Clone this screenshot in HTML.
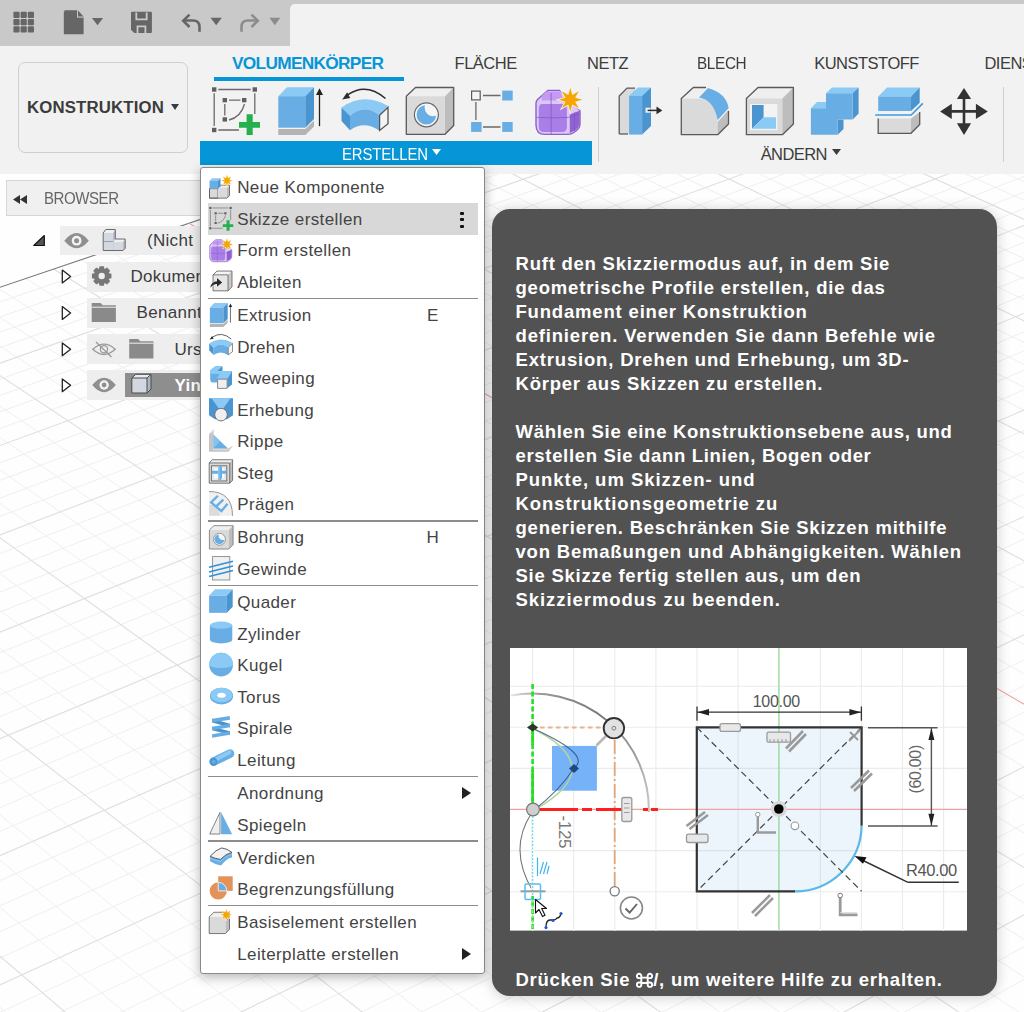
<!DOCTYPE html><html><head><meta charset="utf-8"><style>
html,body{margin:0;padding:0}
body{width:1024px;height:1012px;overflow:hidden;position:relative;background:#fefefe;font-family:"Liberation Sans", sans-serif}
.t{position:absolute;white-space:nowrap}
.i{position:absolute;overflow:visible}
</style></head><body><svg class="i" style="left:0;top:0" width="1024" height="1012" viewBox="0 0 1024 1012"><path d="M-5 303.6L1029 -49.0M-5 318.6L1029 -36.6M-5 333.8L1029 -24.1M-5 349.3L1029 -11.4M-5 380.9L1029 14.7M-5 397.1L1029 28.0M-5 413.6L1029 41.6M-5 430.3L1029 55.4M-5 464.6L1029 83.7M-5 482.2L1029 98.1M-5 500.0L1029 112.9M-5 518.2L1029 127.8M-5 555.5L1029 158.6M-5 574.7L1029 174.4M-5 594.1L1029 190.4M-5 614.0L1029 206.7M-5 654.7L1029 240.3M-5 675.6L1029 257.5M-5 696.9L1029 275.1M-5 718.6L1029 293.0M-5 763.3L1029 329.8M-5 786.2L1029 348.7M-5 809.7L1029 368.0M-5 833.5L1029 387.6M-5 882.7L1029 428.2M-5 908.0L1029 449.0M-5 933.8L1029 470.3M-5 960.2L1029 492.0M-5 1014.6L1029 536.8M-5 1042.7L1029 560.0M-5 1071.3L1029 583.6M-5 1100.6L1029 607.7M-5 1161.1L1029 657.6M-5 1192.4L1029 683.3M-5 1224.3L1029 709.7M-5 1257.0L1029 736.6M-5 1324.8L1029 792.4M-5 1359.8L1029 821.3M-5 1395.7L1029 850.9M-5 1432.5L1029 881.2M-5 1508.8L1029 944.0M-5 1548.4L1029 976.7M-5 1589.0L1029 1010.1M1569.6 -244.1L4444.3 613.7M1554.4 -239.0L4427.5 624.5M1539.1 -233.8L4410.4 635.4M1523.7 -228.6L4393.3 646.4M1492.5 -218.0L4358.5 668.7M1476.8 -212.7L4340.9 680.0M1460.9 -207.3L4323.1 691.4M1444.9 -201.9L4305.2 703.0M1412.6 -191.0L4268.9 726.4M1396.3 -185.4L4250.5 738.3M1379.8 -179.9L4232.0 750.3M1363.3 -174.3L4213.3 762.4M1329.7 -162.9L4175.3 787.1M1312.8 -157.2L4156.1 799.6M1295.7 -151.4L4136.7 812.3M1278.5 -145.6L4117.2 825.1M1243.7 -133.8L4077.5 851.1M1226.1 -127.8L4057.3 864.3M1208.4 -121.8L4037.0 877.6M1190.5 -115.8L4016.5 891.1M1154.4 -103.6L3974.9 918.5M1136.1 -97.4L3953.8 932.5M1117.7 -91.1L3932.5 946.6M1099.1 -84.9L3911.0 960.8M1061.5 -72.1L3867.3 989.8M1042.5 -65.7L3845.1 1004.5M1023.4 -59.2L3822.7 1019.5M1004.0 -52.7L3800.1 1034.5M965.0 -39.4L3754.2 1065.2M945.2 -32.7L3730.8 1080.8M925.2 -26.0L3707.3 1096.6M905.1 -19.2L3683.4 1112.6M864.4 -5.4L3635.0 1145.1M843.8 1.6L3610.4 1161.7M823.0 8.6L3585.5 1178.4M802.1 15.7L3560.4 1195.4M759.6 30.0L3509.3 1229.9M738.2 37.3L3483.2 1247.5M716.5 44.7L3456.9 1265.3M694.7 52.0L3430.3 1283.3M650.4 67.0L3376.2 1320.1M628.0 74.6L3348.6 1338.8M605.4 82.3L3320.8 1357.7M582.6 90.0L3292.5 1376.9M536.4 105.6L3235.1 1416.0M513.0 113.5L3205.8 1436.0M489.4 121.5L3176.2 1456.2M465.6 129.6L3146.1 1476.6M417.3 145.9L3085.0 1518.4M392.8 154.2L3053.8 1539.7M368.2 162.6L3022.2 1561.2M343.3 171.0L2990.1 1583.1M292.8 188.1L2924.8 1627.7M267.2 196.7L2891.4 1650.4M241.3 205.5L2857.6 1673.5M215.3 214.3L2823.4 1696.8M162.4 232.2L2753.3 1744.5M135.6 241.3L2717.6 1768.8M108.5 250.4L2681.3 1793.5M81.2 259.7L2644.4 1818.5M25.8 278.5L2569.1 1869.6M-2.3 288.0L2530.5 1895.6M-30.7 297.6L2491.4 1922.0M-59.4 307.3L2451.7 1948.8M-117.5 327.0L2370.3 2003.5M-147.0 336.9L2328.6 2031.4M-176.8 347.0L2286.3 2059.7M-206.9 357.2L2243.2 2088.4M-268.0 377.9L2154.9 2146.9M-299.1 388.4L2109.6 2176.8M-330.4 399.0L2063.6 2207.0M-362.0 409.7L2016.7 2237.7M-426.3 431.5L1920.5 2300.3M-459.0 442.5L1871.0 2332.3M-491.9 453.7L1820.7 2364.6M-525.3 465.0L1769.5 2397.4M-593.0 487.9L1664.1 2464.2M-627.4 499.5L1609.9 2498.2M-662.1 511.3L1554.6 2532.7M-697.3 523.2L1498.3 2567.5M-768.7 547.4L1382.4 2638.5M-805.0 559.7L1322.7 2674.6M-841.7 572.1L1261.8 2711.1M-878.8 584.6L1199.7 2748.0M-954.3 610.2L1071.6 2822.9M-992.6 623.2L1005.6 2860.9M-1031.4 636.3L938.2 2899.2M-1070.6 649.6L869.4 2937.8M-1150.5 676.6L727.5 3016.1M-1191.1 690.3L654.3 3055.6M-1232.2 704.2L579.6 3095.4M-1273.7 718.3L503.3 3135.4M-1358.3 746.9L345.8 3216.0M-1401.4 761.5L264.5 3256.5M-1444.9 776.3L181.6 3297.1M-1489.0 791.2L96.9 3337.7" stroke="#efefef" stroke-width="1" fill="none"/><path d="M-5 364.9L1029 1.6M-5 447.3L1029 69.4M-5 536.7L1029 143.1M-5 634.1L1029 223.4M-5 740.7L1029 311.2M-5 857.9L1029 407.7M-5 987.1L1029 514.2M-5 1130.5L1029 632.4M-5 1290.5L1029 764.2M-5 1470.2L1029 912.2M1584.7 -249.2L4461.1 603.1M1508.2 -223.3L4375.9 657.5M1428.8 -196.5L4287.1 714.6M1346.6 -168.6L4194.4 774.7M1261.2 -139.7L4097.4 838.0M1172.5 -109.7L3995.8 904.7M1080.4 -78.5L3889.2 975.2M984.6 -46.1L3777.3 1049.8M884.8 -12.3L3659.4 1128.8M780.9 22.8L3535.0 1212.5M672.6 59.5L3403.4 1301.6M559.6 97.8L3264.0 1396.4M441.5 137.7L3115.7 1497.4M318.1 179.5L2957.7 1605.2M53.6 269.0L2607.0 1843.9M-88.3 317.1L2411.3 1976.0M-237.3 367.5L2199.4 2117.4M-394.0 420.5L1969.0 2268.8M-558.9 476.4L1717.2 2430.6M-732.8 535.2L1440.9 2602.8M-916.3 597.3L1136.3 2785.2M-1110.3 663.0L799.2 2976.8M-1315.8 732.5L425.3 3175.6" stroke="#dedede" stroke-width="1.1" fill="none"/><path d="M-5 288.9L1029 -61.1" stroke="#777" stroke-width="1.1" fill="none"/><path d="M189.0 223.2L2788.6 1720.5" stroke="#f2a0a0" stroke-width="1.1" fill="none"/></svg>
<div style="position:absolute;left:0;top:0;width:1024px;height:46px;background:#c9c9c9"></div>
<div style="position:absolute;left:290px;top:4px;width:734px;height:50px;background:#f2f2f2;border-top-left-radius:5px"></div>
<svg class="i" style="left:0;top:0" width="300" height="46" viewBox="0 0 300 46"><rect x="13.4" y="11.8" width="6.2" height="6.2" rx="1" fill="#666"/><rect x="20.6" y="11.8" width="6.2" height="6.2" rx="1" fill="#666"/><rect x="27.8" y="11.8" width="6.2" height="6.2" rx="1" fill="#666"/><rect x="13.4" y="19.0" width="6.2" height="6.2" rx="1" fill="#666"/><rect x="20.6" y="19.0" width="6.2" height="6.2" rx="1" fill="#666"/><rect x="27.8" y="19.0" width="6.2" height="6.2" rx="1" fill="#666"/><rect x="13.4" y="26.2" width="6.2" height="6.2" rx="1" fill="#666"/><rect x="20.6" y="26.2" width="6.2" height="6.2" rx="1" fill="#666"/><rect x="27.8" y="26.2" width="6.2" height="6.2" rx="1" fill="#666"/><path d="M64.5 11.2Q63.8 11.2 63.8 12V33.4Q63.8 34.3 64.6 34.3H82.8Q83.6 34.3 83.6 33.4V17.5L77 10.2H64.6z" fill="#666"/><path d="M77 10.2V17.5H83.6" fill="#c9c9c9"/><path d="M77.2 10.5V17.2H83.4z" fill="#c9c9c9"/><path d="M78 10.5L83.5 16.5H78z" fill="#666"/><path d="M92 18H103.1L97.55 25.3z" fill="#666"/><path d="M131 12.8Q131 11.7 132.1 11.7H150.8Q151.9 11.7 151.9 12.8V32Q151.9 33.1 150.8 33.1H134.3L131 29.8z" fill="#666"/><path d="M136.3 12.4V19.3H146.7V12.4" fill="none" stroke="#c9c9c9" stroke-width="1.8"/><path d="M137.5 33V26.3H145.4V33" fill="none" stroke="#c9c9c9" stroke-width="1.8"/><path d="M199.5 31.7V27Q199.5 20.5 193 20.5H184.5" fill="none" stroke="#666" stroke-width="2.6"/><path d="M189.5 14.6L183.2 20.8L189.5 27" fill="none" stroke="#666" stroke-width="2.6"/><path d="M210.6 17.8H221.8L216.2 25.3z" fill="#666"/><path d="M241.5 31.7V27Q241.5 20.5 248 20.5H256.5" fill="none" stroke="#8c8c8c" stroke-width="2.6"/><path d="M251.5 14.6L257.8 20.8L251.5 27" fill="none" stroke="#8c8c8c" stroke-width="2.6"/><path d="M269.4 17.8H280.3L274.85 25.3z" fill="#8c8c8c"/></svg>
<div style="position:absolute;left:0;top:46px;width:1024px;height:128px;background:#f2f2f2"></div>
<div style="position:absolute;left:18px;top:62px;width:168px;height:89px;border:1px solid #cfcfcf;border-radius:7px;background:#f1f1f1"></div>
<div class="t" style="left:27.00px;top:99.98px;font-size:16.8px;line-height:16.8px;color:#3c3c3c;font-weight:bold;letter-spacing:0.15px;">KONSTRUKTION</div>
<svg class="i" style="left:171px;top:104px;" width="8" height="7" viewBox="0 0 8 7"><path d="M0 0H8L4 6z" fill="#3c3c3c"/></svg>
<div class="t" style="left:232.00px;top:54.56px;font-size:17.3px;line-height:17.3px;color:#0696d7;font-weight:bold;letter-spacing:-0.7px;">VOLUMENKÖRPER</div>
<div style="position:absolute;left:214px;top:77px;width:190px;height:4px;background:#0696d7"></div>
<div class="t" style="left:454.60px;top:55.23px;font-size:16.5px;line-height:16.5px;color:#3c3c3c;font-weight:normal;letter-spacing:-0.5px;">FLÄCHE</div>
<div class="t" style="left:587.00px;top:55.23px;font-size:16.5px;line-height:16.5px;color:#3c3c3c;font-weight:normal;letter-spacing:-0.5px;">NETZ</div>
<div class="t" style="left:696.60px;top:55.23px;font-size:16.5px;line-height:16.5px;color:#3c3c3c;font-weight:normal;letter-spacing:-0.4px;transform:scaleX(0.93);transform-origin:0 0;">BLECH</div>
<div class="t" style="left:814.20px;top:55.23px;font-size:16.5px;line-height:16.5px;color:#3c3c3c;font-weight:normal;letter-spacing:-0.5px;">KUNSTSTOFF</div>
<div class="t" style="left:984.40px;top:55.23px;font-size:16.5px;line-height:16.5px;color:#3c3c3c;font-weight:normal;letter-spacing:-0.5px;">DIENSTPROGRAMME</div>
<div style="position:absolute;left:200px;top:141px;width:392px;height:24px;background:#0696d7"></div>
<div class="t" style="left:341.80px;top:146.03px;font-size:16.5px;line-height:16.5px;color:#ffffff;font-weight:normal;letter-spacing:-0.1px;transform:scaleX(0.9);transform-origin:0 0;">ERSTELLEN</div>
<svg class="i" style="left:432px;top:149px;" width="9" height="7" viewBox="0 0 9 7"><path d="M0 0H9L4.5 6z" fill="#fff"/></svg>
<div class="t" style="left:760.70px;top:146.03px;font-size:16.5px;line-height:16.5px;color:#3c3c3c;font-weight:normal;letter-spacing:-0.6px;">ÄNDERN</div>
<svg class="i" style="left:832px;top:149px;" width="9" height="7" viewBox="0 0 9 7"><path d="M0 0H9L4.5 6z" fill="#3c3c3c"/></svg>
<div style="position:absolute;left:598px;top:87px;width:1px;height:75px;background:#cfcfcf"></div>
<div style="position:absolute;left:1003px;top:87px;width:1px;height:75px;background:#cfcfcf"></div>
<svg class="i" style="left:0;top:0" width="1024" height="174" viewBox="0 0 1024 174"><g id="ic_sketch"><rect x="212" y="87.3" width="4.4" height="4.4" fill="#5f5f5f"/><rect x="252.6" y="87.3" width="4.4" height="4.4" fill="#5f5f5f"/><rect x="212" y="127.8" width="4.4" height="4.4" fill="#5f5f5f"/><rect x="222.6" y="98" width="4.4" height="4.3" fill="#5f5f5f"/><rect x="242" y="98" width="4.4" height="4.3" fill="#5f5f5f"/><rect x="222.6" y="117.3" width="4.4" height="4.3" fill="#5f5f5f"/><g stroke="#6a6a6a" stroke-width="1.3" fill="none"><path d="M218.3 89.5H250.7M214.2 93.3V126M254.8 93.3V114M218.3 130H239M229 100.1H240.5M224.8 104V115.5M244.5 104Q241 117 229 120"/></g><path d="M246.6 114.2H252.7V122.1H260V127.7H252.7V135H246.6V127.7H239V122.1H246.6z" fill="#25b04e"/></g><g id="ic_extrude"><path d="M278.3 129H305.3L314 120.6V126.5L305.3 135H278.3z" fill="#b4b4b4"/><path d="M278.3 96.2L287 87.2H314L305.3 96.2z" fill="#8ccaf6"/><path d="M278.3 96.2H305.3V127.7H278.3z" fill="#68aee4"/><path d="M305.3 96.2L314 87.2V119L305.3 127.7z" fill="#4a94cf"/><path d="M319.5 126.2V94" stroke="#222" stroke-width="1.3"/><path d="M316 95L319.5 88.3L323 95z" fill="#222"/></g><g id="ic_revolve"><path d="M385.5 98.5Q366 82 347.5 95" stroke="#2b2b2b" stroke-width="1.5" fill="none"/><path d="M342.2 99.4L347.2 92.2L350.2 98z" fill="#2b2b2b"/><path d="M341.5 107.4Q364 92 388 106L379.2 115Q364 103 350 115.7z" fill="#8ccaf6"/><path d="M350 115.7Q364 103 379.2 115V130.5Q364 120 350 130.2z" fill="#68aee4"/><path d="M341.5 107.4L350 115.7V130.2L341.5 121z" fill="#4a94cf"/><path d="M379.6 115.2L388 107.2V123.8L379.6 130.4z" fill="#f4f4f4" stroke="#555" stroke-width="1.3"/></g><g id="ic_hole"><path d="M406.3 96.2L415.5 87.5H453.7L445 96.2z" fill="#efefef"/><path d="M406.3 96.2H445V134.3H406.3z" fill="#dadada"/><path d="M445 96.2L453.7 87.5V125.5L445 134.3z" fill="#bdbdbd"/><path d="M406.3 96.2L415.5 87.5H453.7V125.5L445 134.3H406.3z" fill="none" stroke="#5a5a5a" stroke-width="1.3" stroke-linejoin="round"/><circle cx="426.4" cy="114.8" r="12" fill="#f5f5f5" stroke="#666" stroke-width="1.2"/><mask id="hm"><rect x="400" y="90" width="60" height="50" fill="#fff"/><circle cx="433.2" cy="107.6" r="8.6" fill="#000"/></mask><circle cx="426.4" cy="114.8" r="9.8" fill="#68aee4" mask="url(#hm)"/></g><rect x="471.6" y="91.1" width="8.6" height="8.8" fill="#f4f4f4" stroke="#5a5a5a" stroke-width="1.2"/><rect x="502.2" y="90.6" width="10.5" height="9.9" fill="#68aee4"/><rect x="471.1" y="122" width="10.5" height="9.9" fill="#68aee4"/><rect x="502.2" y="122" width="10.5" height="9.9" fill="#68aee4"/><path d="M483 95.5H500.5M475.9 102V120M483 127H500.5" stroke="#6a6a6a" stroke-width="1.3"/><g id="ic_form"><path d="M548 90.4H560L580 110.4V123.8Q580 128 576 131L573 133Q571 134.4 567 134.4H545Q536 134.4 536 125V103.3Q536 101 538 99z" fill="#dcc8f7" stroke="#8d60cc" stroke-width="1.4" stroke-linejoin="round"/><path d="M541.7 95.7L546 91.5H560L564 100.4H541.7z" fill="#c49af5"/><path d="M542 103.9H562Q566.9 103.9 566.9 109V127Q566.9 132 562 132H544Q538.8 132 538.8 127V109Q538.8 103.9 542 103.9z" fill="#a97ee6"/><path d="M569.8 114.5L579.5 110.8V123.8Q579 127 576 130L569.8 133z" fill="#9062d2"/><path d="M551.1 93V134M536.5 117.4Q552 118.5 568.5 117.4L579.5 113.5M574.5 112.5V131" stroke="#8457c4" stroke-width="1" fill="none" opacity="0.75"/><path d="M570.30 87.80 L572.29 95.00 L578.79 91.31 L575.10 97.81 L582.30 99.80 L575.10 101.79 L578.79 108.29 L572.29 104.60 L570.30 111.80 L568.31 104.60 L561.81 108.29 L565.50 101.79 L558.30 99.80 L565.50 97.81 L561.81 91.31 L568.31 95.00z" fill="#f7a600" stroke="#f2f2f2" stroke-width="1.6" paint-order="stroke"/></g><path d="M619.2 96L627 88.1H635V134H619.2z" fill="#dadada"/><path d="M619.2 134V96L627 88.1H635" fill="none" stroke="#5a5a5a" stroke-width="1.3"/><path d="M619.2 134H628" stroke="#5a5a5a" stroke-width="1.3"/><path d="M629.1 95.7L637.8 87.5H651L642.1 95.7z" fill="#8ccaf6"/><path d="M629.1 95.7H642.1V134.6H629.1z" fill="#68aee4"/><path d="M642.1 95.7L651 87.5V126L642.1 134.6z" fill="#4a94cf"/><rect x="645.5" y="107.7" width="5" height="5" fill="#f2f2f2"/><path d="M647.6 110.4H657.5" stroke="#2b2b2b" stroke-width="1.5"/><path d="M656.5 106.6L662.3 110.4L656.5 114.2z" fill="#2b2b2b"/><path d="M681.3 98.5L693.3 87.5H706L699 97.5z" fill="#efefef"/><path d="M681.3 98.5H699Q717.7 99 717.7 122V134.7H681.3z" fill="#dadada"/><path d="M717.7 122L728.5 110V124L717.7 134.7z" fill="#bdbdbd"/><path d="M699 97.5L708 88Q726 93 728.7 108L717.7 120Q714 100 699 97.5z" fill="#68aee4"/><path d="M706 87.5H693.3L681.3 98.5V134.7H717.7L728.5 124V111" fill="none" stroke="#5a5a5a" stroke-width="1.3" stroke-linejoin="round"/><path d="M746.4 98.5L758 87.5H793.4L782.4 98.5z" fill="#efefef"/><path d="M746.4 98.5H782.4V134.7H746.4z" fill="#dadada"/><path d="M782.4 98.5L793.4 87.5V124L782.4 134.7z" fill="#bdbdbd"/><path d="M746.4 98.5L758 87.5H793.4V124L782.4 134.7H746.4z" fill="none" stroke="#5a5a5a" stroke-width="1.3" stroke-linejoin="round"/><rect x="750" y="104" width="27.3" height="26.2" fill="#f3f3f3"/><path d="M752 105H763.6V117.3L752 128.7z" fill="#4a94cf"/><path d="M763.6 117.3H776V128.7H752z" fill="#8ccaf6"/><path d="M810.9 108.2L817 102H826V108.2z" fill="#8ccaf6"/><path d="M826 93.2L832 87.4H858.6L852.6 93.2z" fill="#8ccaf6"/><path d="M852.6 93.2L858.6 87.4V113.6L852.6 119.6z" fill="#4a94cf"/><path d="M837.7 119.6H843.5V129L837.7 134.7z" fill="#4a94cf"/><path d="M810.9 108.2H826V93.2H852.6V119.6H837.7V134.7H810.9z" fill="#68aee4"/><path d="M878.2 118.6H911V133.3H878.2z" fill="#dadada"/><path d="M911 118.6L919.7 112V124.5L911 133.3z" fill="#bdbdbd"/><path d="M878.2 118.6V133.3H911L919.7 124.5V112" fill="none" stroke="#5a5a5a" stroke-width="1.3"/><path d="M878.2 96.4L887 87.4H919.7L911 96.4z" fill="#8ccaf6"/><path d="M878.2 96.4H911V111H878.2z" fill="#68aee4"/><path d="M911 96.4L919.7 87.4V103L911 111z" fill="#4a94cf"/><path d="M875.2 115H911.2L922.8 103.4" fill="none" stroke="#f2f2f2" stroke-width="4.5"/><path d="M875.2 115H911.2L922.8 103.4" fill="none" stroke="#3d9be0" stroke-width="1.6"/><path d="M964 88L971.1 99H956.9z M964 135L956.9 123.3H971.1z M940.1 111.4L951.8 103.8V118.9z M987.8 111.4L975.9 103.8V118.9z" fill="#333"/><path d="M964 98V124M950 111.4H978" stroke="#333" stroke-width="2.6"/></svg>
<div style="position:absolute;left:6px;top:180px;width:220px;height:36px;border:1px solid #d6d6d6;background:#f0f0f0;box-sizing:border-box"></div>
<svg class="i" style="left:13px;top:195px;" width="16" height="9" viewBox="0 0 16 9"><path d="M0 4.5L7 0V9z M7 4.5L14 0V9z" fill="#333"/></svg>
<div class="t" style="left:43.60px;top:190.01px;font-size:17px;line-height:17px;color:#666;font-weight:normal;letter-spacing:-0.5px;transform:scaleX(0.885);transform-origin:0 0;">BROWSER</div>
<div style="position:absolute;left:60.2px;top:225.8px;width:150px;height:29.4px;background:#eeeeee"></div>
<div style="position:absolute;left:87.4px;top:261.8px;width:130px;height:30.2px;background:#eeeeee"></div>
<div style="position:absolute;left:87.4px;top:298px;width:130px;height:29.6px;background:#eeeeee"></div>
<div style="position:absolute;left:87.4px;top:334.3px;width:130px;height:29.4px;background:#eeeeee"></div>
<div style="position:absolute;left:87.4px;top:370.2px;width:130px;height:29.4px;background:#eeeeee"></div>
<div style="position:absolute;left:124.7px;top:372.9px;width:90px;height:24px;background:#8e8e8e"></div>
<svg class="i" style="left:0;top:220" width="200" height="190" viewBox="0 220 200 190"><path d="M33.8 245.5H44.3V235.5z" fill="#555" stroke="#111" stroke-width="1.2" stroke-linejoin="round"/><path d="M62.3 270.1V282.9L70.6 276.5z" fill="#fff" stroke="#222" stroke-width="1.3" stroke-linejoin="round"/><path d="M62.3 306.6V319.4L70.6 313z" fill="#fff" stroke="#222" stroke-width="1.3" stroke-linejoin="round"/><path d="M62.3 342.9V355.7L70.6 349.3z" fill="#fff" stroke="#222" stroke-width="1.3" stroke-linejoin="round"/><path d="M62.3 378.9V391.7L70.6 385.3z" fill="#fff" stroke="#222" stroke-width="1.3" stroke-linejoin="round"/><path d="M64.3 240.7Q76.6 225.5 88.8 240.7Q76.6 255.9 64.3 240.7z" fill="#8f8f8f"/><circle cx="76.6" cy="240.7" r="4.9" fill="#f3f3f3"/><circle cx="76.6" cy="240.7" r="2.5" fill="#8f8f8f"/><path d="M92.3 385Q104.1 370.4 115.8 385Q104.1 399.6 92.3 385z" fill="#8f8f8f"/><circle cx="104.1" cy="385" r="4.7" fill="#f3f3f3"/><circle cx="104.1" cy="385" r="2.4" fill="#8f8f8f"/><path d="M92.8 349.3Q104 339 115.2 349.3Q104 359.6 92.8 349.3z" fill="none" stroke="#9a9a9a" stroke-width="1.3"/><circle cx="104" cy="349.3" r="3.6" fill="none" stroke="#9a9a9a" stroke-width="1.3"/><path d="M96 342L111.5 357" stroke="#9a9a9a" stroke-width="1.3"/><path d="M103.2 233L105.8 229.5H115.3L113 233z" fill="#eef0f4"/><path d="M103.2 233H113V250.5H103.2z" fill="#d3d8e1"/><path d="M113 233L115.3 229.5V248L113 250.5z" fill="#b8bfcb"/><path d="M103.2 241.5H113" stroke="#8a9099" stroke-width="0.8"/><path d="M113.3 242L115.6 239H125.2L123 242z" fill="#eef0f4"/><path d="M113.3 242H123V250.5H113.3z" fill="#d3d8e1"/><path d="M123 242L125.2 239V248.2L123 250.5z" fill="#b8bfcb"/><path d="M103.2 250.5V233L105.8 229.5H115.3V239H125.2V248.2L123 250.5z" fill="none" stroke="#6a6a6a" stroke-width="1" stroke-linejoin="round"/><path d="M111.46 273.82 L111.46 278.18 L108.27 278.94 L108.42 278.57 L110.14 281.36 L107.06 284.44 L104.27 282.72 L104.64 282.57 L103.88 285.76 L99.52 285.76 L98.76 282.57 L99.13 282.72 L96.34 284.44 L93.26 281.36 L94.98 278.57 L95.13 278.94 L91.94 278.18 L91.94 273.82 L95.13 273.06 L94.98 273.43 L93.26 270.64 L96.34 267.56 L99.13 269.28 L98.76 269.43 L99.52 266.24 L103.88 266.24 L104.64 269.43 L104.27 269.28 L107.06 267.56 L110.14 270.64 L108.42 273.43 L108.27 273.06z" fill="#777"/><circle cx="101.7" cy="276" r="3.2" fill="#efefef"/><path d="M91.7 303H100.7L102.7 305.3H115.9V322H91.7z" fill="#8a8a8a"/><path d="M91.7 307.2H115.9" stroke="#efefef" stroke-width="1"/><path d="M129.2 339H138.2L140.2 341.3H153.4V358.5H129.2z" fill="#8a8a8a"/><path d="M129.2 343.2H153.4" stroke="#efefef" stroke-width="1"/><path d="M131.8 378L135.8 374.3H151L147 378z" fill="#e8ebf0"/><path d="M131.8 378H147V393H131.8z" fill="#d2d7e0"/><path d="M147 378L151 374.3V389L147 393z" fill="#aeb5c2"/><path d="M131.8 378L135.8 374.3H151V389L147 393H131.8z M147 393V378L151 374.3 M131.8 378H147" fill="none" stroke="#4a4a4a" stroke-width="1" stroke-linejoin="round"/></svg>
<div class="t" style="left:147.00px;top:232.21px;font-size:17px;line-height:17px;color:#3c3c3c;font-weight:normal;letter-spacing:0.3px;">(Nicht</div>
<div class="t" style="left:130.50px;top:268.21px;font-size:17px;line-height:17px;color:#3c3c3c;font-weight:normal;letter-spacing:0.3px;">Dokumen</div>
<div class="t" style="left:136.50px;top:304.41px;font-size:17px;line-height:17px;color:#3c3c3c;font-weight:normal;letter-spacing:0.3px;">Benannt</div>
<div class="t" style="left:174.50px;top:340.61px;font-size:17px;line-height:17px;color:#3c3c3c;font-weight:normal;letter-spacing:0.3px;">Urs</div>
<div class="t" style="left:174.50px;top:376.61px;font-size:17px;line-height:17px;color:#ffffff;font-weight:bold;letter-spacing:0.3px;">Yin</div>
<div style="position:absolute;left:200px;top:166.5px;width:286px;height:306.5px;"></div>
<div style="position:absolute;left:200px;top:166.6px;width:283px;height:805.2px;border:1.6px solid #8a8a8a;border-radius:3px;background:#fff;box-shadow:0 3px 12px rgba(0,0,0,0.3)"></div>
<div style="position:absolute;left:207.6px;top:202.94px;width:270.4px;height:31.566px;background:#d8d8d8"></div>
<div style="position:absolute;left:207.6px;top:297.63px;width:270.4px;height:1.5px;background:#8c8c8c"></div>
<div style="position:absolute;left:207.6px;top:520.11px;width:270.4px;height:1.5px;background:#8c8c8c"></div>
<div style="position:absolute;left:207.6px;top:584.76px;width:270.4px;height:1.5px;background:#8c8c8c"></div>
<div style="position:absolute;left:207.6px;top:775.67px;width:270.4px;height:1.5px;background:#8c8c8c"></div>
<div style="position:absolute;left:207.6px;top:840.31px;width:270.4px;height:1.5px;background:#8c8c8c"></div>
<div style="position:absolute;left:207.6px;top:904.96px;width:270.4px;height:1.5px;background:#8c8c8c"></div>
<div class="t" style="left:237.20px;top:179.18px;font-size:17px;line-height:17px;color:#444444;font-weight:normal;letter-spacing:0.4px;">Neue Komponente</div>
<div class="t" style="left:237.20px;top:210.75px;font-size:17px;line-height:17px;color:#444444;font-weight:normal;letter-spacing:0.4px;">Skizze erstellen</div>
<div class="t" style="left:237.20px;top:242.31px;font-size:17px;line-height:17px;color:#444444;font-weight:normal;letter-spacing:0.4px;">Form erstellen</div>
<div class="t" style="left:237.20px;top:273.88px;font-size:17px;line-height:17px;color:#444444;font-weight:normal;letter-spacing:0.4px;">Ableiten</div>
<div class="t" style="left:237.20px;top:306.96px;font-size:17px;line-height:17px;color:#444444;font-weight:normal;letter-spacing:0.4px;">Extrusion</div>
<div class="t" style="left:237.20px;top:338.53px;font-size:17px;line-height:17px;color:#444444;font-weight:normal;letter-spacing:0.4px;">Drehen</div>
<div class="t" style="left:237.20px;top:370.09px;font-size:17px;line-height:17px;color:#444444;font-weight:normal;letter-spacing:0.4px;">Sweeping</div>
<div class="t" style="left:237.20px;top:401.66px;font-size:17px;line-height:17px;color:#444444;font-weight:normal;letter-spacing:0.4px;">Erhebung</div>
<div class="t" style="left:237.20px;top:433.22px;font-size:17px;line-height:17px;color:#444444;font-weight:normal;letter-spacing:0.4px;">Rippe</div>
<div class="t" style="left:237.20px;top:464.79px;font-size:17px;line-height:17px;color:#444444;font-weight:normal;letter-spacing:0.4px;">Steg</div>
<div class="t" style="left:237.20px;top:496.36px;font-size:17px;line-height:17px;color:#444444;font-weight:normal;letter-spacing:0.4px;">Prägen</div>
<div class="t" style="left:237.20px;top:529.44px;font-size:17px;line-height:17px;color:#444444;font-weight:normal;letter-spacing:0.4px;">Bohrung</div>
<div class="t" style="left:237.20px;top:561.00px;font-size:17px;line-height:17px;color:#444444;font-weight:normal;letter-spacing:0.4px;">Gewinde</div>
<div class="t" style="left:237.20px;top:594.08px;font-size:17px;line-height:17px;color:#444444;font-weight:normal;letter-spacing:0.4px;">Quader</div>
<div class="t" style="left:237.20px;top:625.65px;font-size:17px;line-height:17px;color:#444444;font-weight:normal;letter-spacing:0.4px;">Zylinder</div>
<div class="t" style="left:237.20px;top:657.21px;font-size:17px;line-height:17px;color:#444444;font-weight:normal;letter-spacing:0.4px;">Kugel</div>
<div class="t" style="left:237.20px;top:688.78px;font-size:17px;line-height:17px;color:#444444;font-weight:normal;letter-spacing:0.4px;">Torus</div>
<div class="t" style="left:237.20px;top:720.35px;font-size:17px;line-height:17px;color:#444444;font-weight:normal;letter-spacing:0.4px;">Spirale</div>
<div class="t" style="left:237.20px;top:751.91px;font-size:17px;line-height:17px;color:#444444;font-weight:normal;letter-spacing:0.4px;">Leitung</div>
<div class="t" style="left:237.20px;top:784.99px;font-size:17px;line-height:17px;color:#444444;font-weight:normal;letter-spacing:0.4px;">Anordnung</div>
<div class="t" style="left:237.20px;top:816.56px;font-size:17px;line-height:17px;color:#444444;font-weight:normal;letter-spacing:0.4px;">Spiegeln</div>
<div class="t" style="left:237.20px;top:849.64px;font-size:17px;line-height:17px;color:#444444;font-weight:normal;letter-spacing:0.4px;">Verdicken</div>
<div class="t" style="left:237.20px;top:881.20px;font-size:17px;line-height:17px;color:#444444;font-weight:normal;letter-spacing:0.4px;">Begrenzungsfüllung</div>
<div class="t" style="left:237.20px;top:914.28px;font-size:17px;line-height:17px;color:#444444;font-weight:normal;letter-spacing:0.4px;">Basiselement erstellen</div>
<div class="t" style="left:237.20px;top:945.85px;font-size:17px;line-height:17px;color:#444444;font-weight:normal;letter-spacing:0.4px;">Leiterplatte erstellen</div>
<div class="t" style="left:427.00px;top:306.96px;font-size:17px;line-height:17px;color:#444444;font-weight:normal;letter-spacing:0px;">E</div>
<div class="t" style="left:426.50px;top:529.44px;font-size:17px;line-height:17px;color:#444444;font-weight:normal;letter-spacing:0px;">H</div>
<svg class="i" style="left:461.6px;top:787.0px;" width="9" height="12" viewBox="0 0 9 12"><path d="M0 0L9 6L0 12z" fill="#222"/></svg>
<svg class="i" style="left:461.6px;top:947.8px;" width="9" height="12" viewBox="0 0 9 12"><path d="M0 0L9 6L0 12z" fill="#222"/></svg>
<div style="position:absolute;left:460px;top:211.5px;width:3.6px;height:3.2px;background:#111;border-radius:1px"></div>
<div style="position:absolute;left:460px;top:218.2px;width:3.6px;height:3.2px;background:#111;border-radius:1px"></div>
<div style="position:absolute;left:460px;top:224.7px;width:3.6px;height:3.2px;background:#111;border-radius:1px"></div>
<svg class="i" style="left:0;top:0" width="1024" height="1012" viewBox="0 0 1024 1012"><g transform="translate(209,175.15)"><path d="M0.5 13.5H9V23H0.5z" fill="#dadada" stroke="#5a5a5a" stroke-width="0.8"/><path d="M9 12.5L11.5 10H20.5L18 12.5z" fill="#efefef"/><path d="M9 12.5H18V23H9z" fill="#dadada"/><path d="M18 12.5L20.5 10V20.5L18 23z" fill="#bdbdbd"/><path d="M9 12.5L11.5 10H20.5V20.5L18 23H0.5V13.5" fill="none" stroke="#5a5a5a" stroke-width="0.8"/><path d="M0.5 5.5L3 3H11.5L9 5.5z" fill="#8ccaf6"/><path d="M0.5 5.5H9V13.5H0.5z" fill="#68aee4"/><path d="M9 5.5L11.5 3V11L9 13.5z" fill="#4a94cf"/><path d="M18.00 -0.30 L18.96 3.19 L22.10 1.40 L20.31 4.54 L23.80 5.50 L20.31 6.46 L22.10 9.60 L18.96 7.81 L18.00 11.30 L17.04 7.81 L13.90 9.60 L15.69 6.46 L12.20 5.50 L15.69 4.54 L13.90 1.40 L17.04 3.19z" fill="#f7a600" stroke="#fff" stroke-width="1" paint-order="stroke"/></g><g transform="translate(209,206.72)"><use href="#ic_sketch" transform="scale(0.5) translate(-211.5,-87)"/></g><g transform="translate(209,238.28)"><use href="#ic_form" transform="scale(0.5) translate(-534.5,-87.5)"/></g><g transform="translate(209,269.85)"><path d="M4 5L8 1.2H23L19 5z" fill="#f4f4f4"/><path d="M4 5H19V21H4z" fill="#e6e6e6"/><path d="M19 5L23 1.2V17L19 21z" fill="#c9c9c9"/><path d="M4 5L8 1.2H23V17L19 21H4z M4 5H19V21" fill="none" stroke="#5a5a5a" stroke-width="0.8"/><path d="M1.2 18Q2 12 8 11.5V8.2L13.2 12.6L8 17V14.2Q4 14.2 1.2 18z" fill="#2a2a2a" stroke="#fff" stroke-width="0.8" paint-order="stroke"/></g><g transform="translate(209,302.93)"><use href="#ic_extrude" transform="scale(0.5) translate(-276.6,-87)"/></g><g transform="translate(209,334.49)"><use href="#ic_revolve" transform="translate(0,-1.2) scale(0.5) translate(-341,-87)"/></g><g transform="translate(209,366.06)"><path d="M1.2 4.3L6.4 0.2H13.3V5H23V18.2L18.5 22H8.1V16.4H3.5Q1.2 16.4 1.2 14z" fill="#68aee4"/><path d="M1.2 4.3L6.4 0.2H13.3L8.5 5H23L18.5 12.6H8.1L10.8 7.8H1.2z" fill="#8ccaf6"/><path d="M8.5 5L13.3 0.2V5z" fill="#4a94cf"/><path d="M18.5 12.6L23 6V18.2L18.5 22z" fill="#4a94cf"/><path d="M8.6 13.1H18.1V22.3H8.6z" fill="#f0f0f0" stroke="#8a8a8a" stroke-width="1"/></g><g transform="translate(209,397.63)"><path d="M0 0.5H24V17.5L18 21.5H6L0 17.5z" fill="#4a94cf"/><path d="M2.5 0.5H21.5L14 11H10z" fill="#8ccaf6"/><circle cx="12" cy="17" r="6.3" fill="#efefef" stroke="#6a6a6a" stroke-width="0.9"/></g><g transform="translate(209,429.19)"><path d="M0 4.5L5 0V19.2H18.5L24 16.5L19.5 22.5H0z" fill="#c4c4c4"/><path d="M0.8 5L4.5 1.5V20.5H19L22 18" fill="none" stroke="#e6e6e6" stroke-width="0.8"/><path d="M4.5 5.5L19 19.2H4.5z" fill="#68aee4"/><path d="M4.5 5.5L11 11.5L6.5 17.5H4.5z" fill="#8ccaf6" opacity="0.7"/></g><g transform="translate(209,460.76)"><path d="M0.2 2.2L3.2 -1.05H23.6L20.7 2.2z" fill="#efefef"/><path d="M0.2 2.2H20.7V22.45H0.2z" fill="#dadada"/><path d="M20.7 2.2L23.6 -1.05V19.5L20.7 22.45z" fill="#bdbdbd"/><path d="M0.2 2.2L3.2 -1.05H23.6V19.5L20.7 22.45H0.2z M0.2 2.2H20.7V22.45" fill="none" stroke="#5a5a5a" stroke-width="0.8"/><rect x="2.4" y="5.05" width="15.4" height="15.15" fill="#e9e9e9" stroke="#666" stroke-width="0.9"/><rect x="5" y="7.5" width="10" height="10" fill="#f8f8f8"/><path d="M9.2 5.5H13V16Q13 19.5 10 20H9.2z M2.8 9.9H17.4V13.1H2.8z" fill="#68aee4"/><path d="M9.2 5.5H10.6V20H9.2z" fill="#8ccaf6"/></g><g transform="translate(209,492.32)"><path d="M0 23.5V-0.8Q23.5 -0.8 23.5 23.5z" fill="#f0f0f0"/><path d="M0 -0.8Q23.5 -0.8 23.5 23.5" fill="none" stroke="#8a8a8a" stroke-width="0.9"/><path d="M0 23.5V12.5Q11 12.5 11 23.5z" fill="#dcdcdc"/><path d="M8.85 3.4L2.1 10.15L12.4 18.8L18.5 11.4M6.9 14.3L14.3 7.3" fill="none" stroke="#68aee4" stroke-width="2.3" stroke-linejoin="miter"/></g><g transform="translate(209,525.40)"><use href="#ic_hole" transform="scale(0.5) translate(-405.5,-87)"/></g><g transform="translate(209,556.97)"><rect x="3.6" y="-0.4" width="17.2" height="23.4" fill="#f0f0f0" stroke="#8a8a8a" stroke-width="0.9"/><path d="M0 10.2L24 4.2M0 15L24 9M0 19.6L24 13.6" stroke="#2f8fdc" stroke-width="1.5"/></g><g transform="translate(209,590.05)"><path d="M0.1 5.5L6 -0.7H23.7L17.9 5.5z" fill="#8ccaf6"/><path d="M0.1 5.5H17.9V22.8H0.1z" fill="#68aee4"/><path d="M17.9 5.5L23.7 -0.7V16.6L17.9 22.8z" fill="#4a94cf"/></g><g transform="translate(209,621.62)"><path d="M0.9 3.6V18.2A11.2 3.6 0 0 0 23.3 18.2V3.6z" fill="#68aee4"/><ellipse cx="12.1" cy="3.6" rx="11.2" ry="3.6" fill="#8ccaf6"/></g><g transform="translate(209,653.18)"><circle cx="12.1" cy="11.5" r="11.9" fill="#68aee4"/><path d="M0.2 11.5A11.9 11.9 0 0 1 24 11.5A11.9 3.2 0 0 1 0.2 11.5z" fill="#8ccaf6"/></g><g transform="translate(209,684.75)"><ellipse cx="12.5" cy="11.3" rx="11.6" ry="8.4" fill="#68aee4"/><ellipse cx="12.5" cy="10.4" rx="11" ry="7.3" fill="#8ccaf6"/><ellipse cx="12.5" cy="10.6" rx="4.2" ry="2.5" fill="#fff"/></g><g transform="translate(209,716.31)"><path d="M3.1 2.56V6.16L20.9 11.06V7.46z" fill="#4a90c9"/><path d="M3.1 10.46V14.06L20.9 18.46V14.86z" fill="#4a90c9"/><path d="M20.9 -0.24V3.36L3.1 6.16V2.56z" fill="#64ade4"/><path d="M20.9 7.46V11.06L3.1 14.06V10.46z" fill="#64ade4"/><path d="M20.9 14.86V18.46L3.1 21.46V17.86z" fill="#64ade4"/></g><g transform="translate(209,747.88)"><path d="M4.5 13.8L21 5.8" stroke="#68aee4" stroke-width="8.6" stroke-linecap="round"/><path d="M5 12.3L20.5 4.5" stroke="#8ccaf6" stroke-width="4" stroke-linecap="round"/><ellipse cx="4.6" cy="13.8" rx="3.6" ry="4" fill="#4a94cf"/><ellipse cx="4.8" cy="13.8" rx="1.8" ry="2" fill="#68aee4"/></g><g transform="translate(209,812.53)"><path d="M0.7 21.5L11 -0.2V21.5z" fill="#f0f0f0" stroke="#777" stroke-width="0.9" stroke-linejoin="round"/><path d="M12.1 -0.3L23.1 21.7H12.1z" fill="#68aee4"/></g><g transform="translate(209,845.61)"><path d="M1.1 10.7Q7 4 12.7 2.3Q18 3 23 6.8V11.8Q18 12 12 20Q6 19 1.1 15.7z" fill="#68aee4"/><path d="M1.1 10.7Q7 4 12.7 2.3Q18 3 23 6.8Q17 8 11.4 13.8Q6 13 1.1 10.7z" fill="#f2f2f2" stroke="#555" stroke-width="0.9"/><path d="M1.1 12.5Q6 15 11.4 15.8Q17 10 23 8.5" fill="none" stroke="#8ccaf6" stroke-width="1"/></g><g transform="translate(209,877.17)"><rect x="9.2" y="-0.9" width="14.5" height="14.6" fill="#e3925a"/><circle cx="9.2" cy="13.8" r="8.6" fill="#e3925a"/><path d="M9.2 5.2A8.6 8.6 0 0 1 17.8 13.7H9.2z" fill="#68aee4" stroke="#fff" stroke-width="0.8"/></g><g transform="translate(209,910.25)"><path d="M0.2 6.5L5 2H20.5L16.5 6.5z" fill="#efefef"/><path d="M0.2 6.5H16.5V23.3H0.2z" fill="#dadada"/><path d="M16.5 6.5L20.5 2V19L16.5 23.3z" fill="#bdbdbd"/><path d="M0.2 6.5L5 2H20.5V19L16.5 23.3H0.2z" fill="none" stroke="#5a5a5a" stroke-width="0.8"/><path d="M17.20 -1.20 L18.16 2.29 L21.30 0.50 L19.51 3.64 L23.00 4.60 L19.51 5.56 L21.30 8.70 L18.16 6.91 L17.20 10.40 L16.24 6.91 L13.10 8.70 L14.89 5.56 L11.40 4.60 L14.89 3.64 L13.10 0.50 L16.24 2.29z" fill="#f7a600" stroke="#fff" stroke-width="1" paint-order="stroke"/></g></svg>
<div style="position:absolute;left:491.8px;top:208.8px;width:505px;height:787.4px;background:#525252;border-radius:18px;box-shadow:0 1px 14px rgba(0,0,0,0.2)"></div>
<div class="t" style="left:515.50px;top:254.94px;font-size:18.5px;line-height:18.5px;color:#fff;font-weight:bold;letter-spacing:0.771px;">Ruft den Skizziermodus auf, in dem Sie</div>
<div class="t" style="left:515.50px;top:278.94px;font-size:18.5px;line-height:18.5px;color:#fff;font-weight:bold;letter-spacing:0.816px;">geometrische Profile erstellen, die das</div>
<div class="t" style="left:515.50px;top:302.94px;font-size:18.5px;line-height:18.5px;color:#fff;font-weight:bold;letter-spacing:0.819px;">Fundament einer Konstruktion</div>
<div class="t" style="left:515.50px;top:326.94px;font-size:18.5px;line-height:18.5px;color:#fff;font-weight:bold;letter-spacing:0.829px;">definieren. Verwenden Sie dann Befehle wie</div>
<div class="t" style="left:515.50px;top:350.94px;font-size:18.5px;line-height:18.5px;color:#fff;font-weight:bold;letter-spacing:0.821px;">Extrusion, Drehen und Erhebung, um 3D-</div>
<div class="t" style="left:515.50px;top:374.94px;font-size:18.5px;line-height:18.5px;color:#fff;font-weight:bold;letter-spacing:0.78px;">Körper aus Skizzen zu erstellen.</div>
<div class="t" style="left:515.50px;top:422.94px;font-size:18.5px;line-height:18.5px;color:#fff;font-weight:bold;letter-spacing:0.72px;">Wählen Sie eine Konstruktionsebene aus, und</div>
<div class="t" style="left:515.50px;top:446.94px;font-size:18.5px;line-height:18.5px;color:#fff;font-weight:bold;letter-spacing:0.675px;">erstellen Sie dann Linien, Bogen oder</div>
<div class="t" style="left:515.50px;top:470.94px;font-size:18.5px;line-height:18.5px;color:#fff;font-weight:bold;letter-spacing:0.958px;">Punkte, um Skizzen- und</div>
<div class="t" style="left:515.50px;top:494.94px;font-size:18.5px;line-height:18.5px;color:#fff;font-weight:bold;letter-spacing:0.929px;">Konstruktionsgeometrie zu</div>
<div class="t" style="left:515.50px;top:518.94px;font-size:18.5px;line-height:18.5px;color:#fff;font-weight:bold;letter-spacing:0.772px;">generieren. Beschränken Sie Skizzen mithilfe</div>
<div class="t" style="left:515.50px;top:542.94px;font-size:18.5px;line-height:18.5px;color:#fff;font-weight:bold;letter-spacing:0.802px;">von Bemaßungen und Abhängigkeiten. Wählen</div>
<div class="t" style="left:515.50px;top:566.94px;font-size:18.5px;line-height:18.5px;color:#fff;font-weight:bold;letter-spacing:0.759px;">Sie Skizze fertig stellen aus, um den</div>
<div class="t" style="left:515.50px;top:590.94px;font-size:18.5px;line-height:18.5px;color:#fff;font-weight:bold;letter-spacing:0.947px;">Skizziermodus zu beenden.</div>
<div class="t" style="left:515.50px;top:970.74px;font-size:18.5px;line-height:18.5px;color:#fff;font-weight:bold;letter-spacing:0.7px;">Drücken Sie</div>
<div class="t" style="left:653.20px;top:970.74px;font-size:18.5px;line-height:18.5px;color:#fff;font-weight:bold;letter-spacing:0.76px;">/, um weitere Hilfe zu erhalten.</div>
<svg class="i" style="left:636px;top:972.5px;" width="17" height="14" viewBox="0 0 17 14"><path d="M5.3 4.6H11.7V10H5.3z M5.3 4.6V2.9A2.2 2.2 0 1 0 3.1 5.1H5.3 M11.7 4.6V2.9A2.2 2.2 0 1 1 13.9 5.1H11.7 M5.3 10V11.7A2.2 2.2 0 1 1 3.1 9.5H5.3 M11.7 10V11.7A2.2 2.2 0 1 0 13.9 9.5H11.7" fill="none" stroke="#fff" stroke-width="1.9"/></svg>
<svg class="i" style="left:510px;top:648px;overflow:hidden" width="457" height="283" viewBox="510 648 457 283"><rect x="509.9" y="648" width="457.2" height="282.6" fill="#fff"/><path d="M491.5 648V931" stroke="#ebebeb" stroke-width="1.1"/><path d="M532.6 648V931" stroke="#ebebeb" stroke-width="1.1"/><path d="M573.7 648V931" stroke="#ebebeb" stroke-width="1.1"/><path d="M614.8 648V931" stroke="#ebebeb" stroke-width="1.1"/><path d="M655.9 648V931" stroke="#ebebeb" stroke-width="1.1"/><path d="M697.0 648V931" stroke="#ebebeb" stroke-width="1.1"/><path d="M738.1 648V931" stroke="#ebebeb" stroke-width="1.1"/><path d="M779.2 648V931" stroke="#ebebeb" stroke-width="1.1"/><path d="M820.3 648V931" stroke="#ebebeb" stroke-width="1.1"/><path d="M861.4 648V931" stroke="#ebebeb" stroke-width="1.1"/><path d="M902.5 648V931" stroke="#ebebeb" stroke-width="1.1"/><path d="M943.6 648V931" stroke="#ebebeb" stroke-width="1.1"/><path d="M510 645.1H967" stroke="#ebebeb" stroke-width="1.1"/><path d="M510 686.2H967" stroke="#ebebeb" stroke-width="1.1"/><path d="M510 727.3H967" stroke="#ebebeb" stroke-width="1.1"/><path d="M510 768.4H967" stroke="#ebebeb" stroke-width="1.1"/><path d="M510 809.5H967" stroke="#ebebeb" stroke-width="1.1"/><path d="M510 850.6H967" stroke="#ebebeb" stroke-width="1.1"/><path d="M510 891.7H967" stroke="#ebebeb" stroke-width="1.1"/><path d="M696.8 727.4H861.6V825.8A66.5 66.5 0 0 1 795.1 891.3H696.8z" fill="rgb(90,160,230)" fill-opacity="0.11"/><path d="M778.9 648V931" stroke="#8fdc8f" stroke-width="1.2"/><path d="M510 809.4H967" stroke="#f3a0a0" stroke-width="1.2"/><path d="M795.1 891.3H696.8V727.4H861.6V825.8" fill="none" stroke="#333" stroke-width="2.2"/><path d="M861.6 825.8A66.5 66.5 0 0 1 795.1 891.3" fill="none" stroke="#5bb8ea" stroke-width="2.2"/><path d="M696.8 727.4L861.6 891.3M861.6 727.4L696.8 891.3" stroke="#444" stroke-width="1.2" stroke-dasharray="6.5 4"/><circle cx="778.8" cy="809" r="8" fill="#d8d8d8"/><circle cx="778.8" cy="809" r="4.8" fill="#000"/><circle cx="794.9" cy="825.8" r="3.8" fill="#fff" stroke="#999" stroke-width="1.1"/><path d="M697 712.2H861.4M697 706.6V720.8M861.4 706.6V720.8" stroke="#333" stroke-width="1.3"/><path d="M697.5 712.2L709 709V715.4z M860.9 712.2L849.4 709V715.4z" fill="#222"/><text x="776.3" y="706.6" font-size="16" fill="#555" text-anchor="middle" font-family="Liberation Sans" letter-spacing="-0.3">100.00</text><path d="M868 727.8H937.6M868 826H937.6M931.4 728.5V825.5" stroke="#555" stroke-width="1.4"/><path d="M931.4 728.3L928.4 740H934.4z M931.4 825.5L928.4 813.8H934.4z" fill="#222"/><text transform="translate(920.8 769.3) rotate(-90)" font-size="16" fill="#666" text-anchor="middle" font-family="Liberation Sans" letter-spacing="-0.3">(60.00)</text><text x="906" y="876.2" font-size="16.5" fill="#555" font-family="Liberation Sans" letter-spacing="-0.4">R40.00</text><path d="M907.5 882.2H958.8M907.5 882.2L862 860" stroke="#333" stroke-width="1.5"/><path d="M854.5 856.1L866.5 857.2L863 863.8z" fill="#111"/><rect x="720" y="723.6" width="20.5" height="7.8" rx="2" fill="#e8e8e8" stroke="#9a9a9a" stroke-width="1.3"/><rect x="767" y="732.2" width="23.5" height="10" rx="1.5" fill="#e8e8e8" stroke="#9a9a9a" stroke-width="1.3"/><path d="M770 739V742M774 739V742M778 739V742M782 739V742M786 739V742" stroke="#9a9a9a" stroke-width="1"/><path d="M786 748.5L803 731M789 751.5L806 734" stroke="#9a9a9a" stroke-width="2.6"/><path d="M851 788L869 770.5M854 791L872 773.5" stroke="#9a9a9a" stroke-width="2.6"/><path d="M686.5 826L705 812M689.5 829L708 815" stroke="#9a9a9a" stroke-width="2.6"/><path d="M752 913L770 895M755 916L773 898" stroke="#9a9a9a" stroke-width="2.6"/><rect x="686.5" y="834.2" width="21.5" height="8.3" rx="2" fill="#e8e8e8" stroke="#9a9a9a" stroke-width="1.3"/><path d="M849 741L860 730M850 732L858 740" stroke="#9a9a9a" stroke-width="2"/><path d="M757.8 815V832.5H776" fill="none" stroke="#9a9a9a" stroke-width="2.4"/><circle cx="757.8" cy="814.5" r="2.2" fill="#fff" stroke="#9a9a9a" stroke-width="1"/><path d="M840.2 895.5V914.8H857.5" fill="none" stroke="#9a9a9a" stroke-width="2.8"/><circle cx="840.2" cy="895.5" r="2.3" fill="#fff" stroke="#777" stroke-width="1"/><path d="M840.2 912.5H857" stroke="#ddd" stroke-width="0.9"/><defs><linearGradient id="arcg" x1="510" y1="0" x2="660" y2="0" gradientUnits="userSpaceOnUse"><stop offset="0" stop-color="#e8e8e8"/><stop offset="0.2" stop-color="#9a9a9a"/><stop offset="0.6" stop-color="#7a7a7a"/><stop offset="0.85" stop-color="#a0a0a0"/><stop offset="1" stop-color="#e4e4e4"/></linearGradient><linearGradient id="arcv" x1="0" y1="700" x2="0" y2="840" gradientUnits="userSpaceOnUse"><stop offset="0" stop-color="#fff" stop-opacity="0"/><stop offset="0.7" stop-color="#fff" stop-opacity="0"/><stop offset="1" stop-color="#fff" stop-opacity="0.9"/></linearGradient></defs><path d="M511 695.6A116.4 116.4 0 0 1 648.9 812" fill="none" stroke="url(#arcg)" stroke-width="2"/><path d="M531 814Q508 850 533 891.3" fill="none" stroke="#777" stroke-width="1.1"/><path d="M532.6 684V930" stroke="#22e022" stroke-width="2.6" stroke-dasharray="5 2.5"/><path d="M532.6 727V745M532.6 770V806" stroke="#22e022" stroke-width="2.6"/><path d="M532.6 816V896" stroke="#fff" stroke-width="2.8"/><path d="M532.6 816V896" stroke="#7dd6f0" stroke-width="1.4" stroke-dasharray="2 1.5"/><path d="M532.6 900V930" stroke="#8ee88e" stroke-width="1.4" stroke-dasharray="3 2"/><path d="M540 727.5H602" stroke="#e8b48a" stroke-width="2" stroke-dasharray="4.5 3.5"/><path d="M614.7 740V886" stroke="#e0a878" stroke-width="1.8" stroke-dasharray="14 3 2 3"/><path d="M596.5 745.5L606 736" stroke="#b8b8b8" stroke-width="2.6"/><rect x="552" y="745.9" width="44.9" height="44.8" fill="#76b2f8"/><path d="M534 729Q610 768 534 810" fill="none" stroke="#b3d49a" stroke-width="1.5"/><path d="M534 729Q592 755 574 768Q560 790 534 810" fill="none" stroke="#2c4c7a" stroke-width="1.1" opacity="0.8"/><path d="M527 727.5L532.6 723.5L538.2 727.5L532.6 731.5z" fill="#2a3a2a"/><path d="M569 768.5L574 764L579 768.5L574 773z" fill="#1f4a80"/><circle cx="613.9" cy="728.2" r="10.2" fill="#e2e2e2" stroke="#333" stroke-width="1.9"/><circle cx="613.9" cy="728.2" r="1.9" fill="none" stroke="#777" stroke-width="0.9"/><path d="M540 809.5H578M582 809.5H592M596 809.5H632M643 809.5H648M651 809.5H658" stroke="#ff1f1f" stroke-width="3"/><circle cx="533" cy="809.5" r="6.4" fill="#cfcfcf" stroke="#777" stroke-width="1.2"/><rect x="621.8" y="797.5" width="10" height="24" rx="2" fill="#e8e8e8" stroke="#9a9a9a" stroke-width="1.3"/><path d="M624 803.5H629.5M624 808H629.5M624 812.5H629.5" stroke="#9a9a9a" stroke-width="1"/><text transform="translate(558.5 831.8) rotate(90)" font-size="17" fill="#777" text-anchor="middle" font-family="Liberation Sans" letter-spacing="-0.3">-125</text><path d="M537.5 857.5V876M540 874L543.5 862M543.5 874L547 862M547 874L549 866" stroke="#3fb8ee" stroke-width="1.2"/><path d="M520.5 891.3H545.5" stroke="#999" stroke-width="2"/><rect x="525" y="884" width="15.5" height="15.5" rx="1.2" fill="none" stroke="#55c0f0" stroke-width="1.5"/><path d="M535.5 899.5V913L539 909.5L542.5 916.5L545 915.2L541.7 908.5H546.5z" fill="#fff" stroke="#111" stroke-width="1.1" stroke-linejoin="round"/><path d="M546 927.5Q546 920 550 920H553Q556 920 557 918Q560 918 561 913.5" fill="none" stroke="#222" stroke-width="1.3"/><circle cx="546" cy="927.6" r="1.6" fill="#1f5fd0"/><circle cx="553" cy="920.5" r="1.6" fill="#1f5fd0"/><circle cx="561" cy="913.5" r="1.6" fill="#1f5fd0"/><circle cx="614.7" cy="891.3" r="4.6" fill="#fff" stroke="#777" stroke-width="1.3"/><circle cx="631.4" cy="908" r="11" fill="#fff" stroke="#888" stroke-width="1.6"/><path d="M625.5 908.5L629.6 912.5L637 904" fill="none" stroke="#666" stroke-width="1.9"/></svg></body></html>
